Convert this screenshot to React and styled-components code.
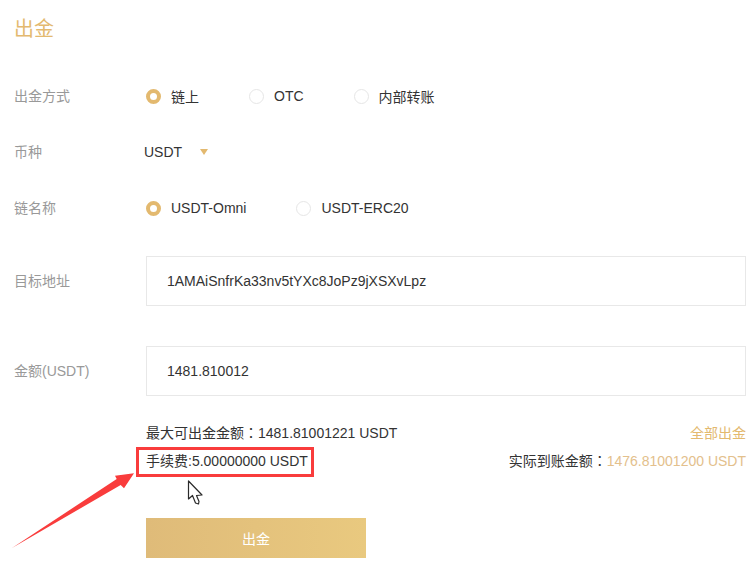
import React from "react";
import styled, { createGlobalStyle } from "styled-components";

const GlobalStyle = createGlobalStyle`
  html, body {
    margin: 0;
    background: #fff;
  }
  body {
    font-family: "Liberation Sans", "Noto Sans CJK SC", sans-serif;
    font-size: 14px;
    color: #333;
  }
`;

const App = () => {
  return (
    <Page>
      <GlobalStyle />
      <Title>出金</Title>

      <Row>
        <Label>出金方式</Label>
        <RadioGroup>
          <Radio checked>链上</Radio>
          <Radio>OTC</Radio>
          <Radio>内部转账</Radio>
        </RadioGroup>
      </Row>

      <Row>
        <Label>币种</Label>
        <Select>
          USDT
          <Caret />
        </Select>
      </Row>

      <Row>
        <Label>链名称</Label>
        <RadioGroup>
          <Radio checked>USDT-Omni</Radio>
          <Radio>USDT-ERC20</Radio>
        </RadioGroup>
      </Row>

      <InputRow>
        <Label>目标地址</Label>
        <Input readOnly value="1AMAiSnfrKa33nv5tYXc8JoPz9jXSXvLpz" />
      </InputRow>

      <InputRow $gap={40}>
        <Label>金额(USDT)</Label>
        <Input readOnly value="1481.810012" />
      </InputRow>

      <Info>
        <InfoLine>
          <span>
            最大可出金金额<Colon>：</Colon>1481.81001221 USDT
          </span>
          <Gold>全部出金</Gold>
        </InfoLine>
        <InfoLine>
          <span>手续费:5.00000000 USDT</span>
          <span>
            实际到账金额<Colon>：</Colon>
            <Amount>1476.81001200 USDT</Amount>
          </span>
        </InfoLine>
      </Info>

      <Submit>出金</Submit>

      <Highlight />
      <Arrow viewBox="0 0 130 90">
        <polygon points="0,85 104.7,16 103,12.7 122,10.3 112,25.3 108.7,22" fill="#f93c3c" />
      </Arrow>
      <Cursor viewBox="0 0 17 26">
        <path
          d="M1.5 1 L1.5 19 L5.5 15.5 L8.5 23 L11.5 24 L12 21.5 L9.5 15.5 L15 15 Z"
          fill="#fff"
          stroke="#2a2a2a"
          strokeWidth="1.2"
          strokeLinejoin="round"
        />
      </Cursor>
    </Page>
  );
};

const Radio = ({ checked, children }) => (
  <RadioItem>
    <RadioDot $checked={checked} />
    {children}
  </RadioItem>
);

const Page = styled.div`
  position: relative;
  width: 756px;
  height: 569px;
  padding: 0 10px 0 14px;
  box-sizing: border-box;
  overflow: hidden;
`;

const Title = styled.h1`
  margin: 0 0 10px;
  height: 58px;
  line-height: 58px;
  font-size: 20px;
  font-weight: 400;
  color: #e3b96f;
`;

const Row = styled.div`
  display: flex;
  align-items: center;
  height: 56px;
`;

const InputRow = styled(Row)`
  height: 50px;
  margin-top: ${(p) => p.$gap || 20}px;
`;

const Label = styled.div`
  flex: 0 0 132px;
  padding-bottom: 2px;
  color: #999;
`;

const RadioGroup = styled.div`
  display: flex;
  gap: 50px;
`;

const RadioItem = styled.label`
  display: flex;
  align-items: center;
  gap: 10px;
  color: #333;
`;

const RadioDot = styled.span`
  width: 15px;
  height: 15px;
  box-sizing: border-box;
  border-radius: 50%;
  background: ${(p) => (p.$checked ? "#fff" : "transparent")};
  border: ${(p) => (p.$checked ? "4.5px solid #e3b96f" : "1px solid #e6e6e6")};
`;

const Select = styled.div`
  display: flex;
  align-items: center;
  gap: 18px;
  margin-left: -2px;
  color: #333;
`;

const Caret = styled.span`
  width: 0;
  height: 0;
  border-left: 4px solid transparent;
  border-right: 4px solid transparent;
  border-top: 6px solid #e3b96f;
`;

const Input = styled.input`
  flex: 1;
  min-width: 0;
  height: 50px;
  box-sizing: border-box;
  padding: 0 20px;
  border: 1px solid #e8e8e8;
  outline: none;
  font: inherit;
  color: #333;
`;

const Info = styled.div`
  margin: 23px 0 43px 132px;
`;

const InfoLine = styled.div`
  display: flex;
  justify-content: space-between;
  height: 28px;
  line-height: 28px;
  color: #333;
`;

const Colon = styled.span`
  font-family: "Noto Sans CJK TC", sans-serif;
  line-height: 0;
`;

const Gold = styled.span`
  color: #e3b96f;
`;

const Amount = styled.span`
  color: #e3c08c;
`;

const Submit = styled.button`
  display: block;
  width: 220px;
  height: 40px;
  margin-left: 132px;
  padding: 0;
  border: 0;
  background: linear-gradient(90deg, #dfbb79, #e9c97f);
  color: #fff;
  font: inherit;
`;

const Highlight = styled.div`
  position: absolute;
  left: 136px;
  top: 447px;
  width: 178px;
  height: 30px;
  box-sizing: border-box;
  border: 3px solid #f93c3c;
`;

const Arrow = styled.svg`
  position: absolute;
  left: 12px;
  top: 463px;
  width: 130px;
  height: 90px;
`;

const Cursor = styled.svg`
  position: absolute;
  left: 187px;
  top: 480px;
  width: 17px;
  height: 26px;
`;

export default App;
